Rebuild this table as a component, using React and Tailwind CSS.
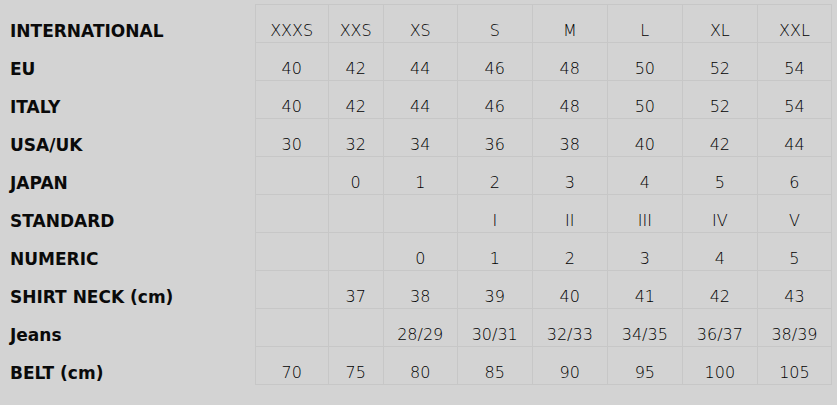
const sizes = ['XXXS', 'XXS', 'XS', 'S', 'M', 'L', 'XL', 'XXL'];

const rows = [
    { label: 'EU', values: ['40', '42', '44', '46', '48', '50', '52', '54'] },
    { label: 'ITALY', values: ['40', '42', '44', '46', '48', '50', '52', '54'] },
    { label: 'USA/UK', values: ['30', '32', '34', '36', '38', '40', '42', '44'] },
    { label: 'JAPAN', values: ['', '0', '1', '2', '3', '4', '5', '6'] },
    { label: 'STANDARD', values: ['', '', '', 'I', 'II', 'III', 'IV', 'V'] },
    { label: 'NUMERIC', values: ['', '', '0', '1', '2', '3', '4', '5'] },
    { label: 'SHIRT NECK (cm)', values: ['', '37', '38', '39', '40', '41', '42', '43'] },
    { label: 'Jeans', values: ['', '', '28/29', '30/31', '32/33', '34/35', '36/37', '38/39'] },
    { label: 'BELT (cm)', values: ['70', '75', '80', '85', '90', '95', '100', '105'] }
];

const colWidths = ['w-[73px]', 'w-[55px]', 'w-[74px]', 'w-[75px]', 'w-[75px]', 'w-[75px]', 'w-[75px]', 'w-[74px]'];

// 라벨 셀 / 값 셀 공통 스타일
const labelCls = "pl-[10px] pt-[15px] pb-0 align-top leading-[22px] text-[17px] font-bold text-[#0a0a0a] whitespace-nowrap";
const valueCls = "border border-[#c7c7c7] pt-[15px] pb-0 align-top leading-[22px] text-center text-[16px] font-extralight text-black";

const App = () => {
    return (
        <div className="min-h-screen bg-[#d3d3d3] pt-[4px] font-['DejaVu_Sans',sans-serif]">
            <table className="table-fixed border-collapse w-[832px]">
                <colgroup>
                    <col className="w-[255px]" />
                    {colWidths.map((w, i) => (
                        <col key={i} className={w} />
                    ))}
                </colgroup>
                <tbody>
                    <tr className="h-[38px]">
                        <td className={labelCls}>INTERNATIONAL</td>
                        {sizes.map((s) => (
                            <td key={s} className={valueCls}>
                                {s}
                            </td>
                        ))}
                    </tr>
                    {rows.map((row) => (
                        <tr key={row.label} className="h-[38px]">
                            <td className={labelCls}>{row.label}</td>
                            {row.values.map((v, i) => (
                                <td key={i} className={valueCls}>
                                    {v}
                                </td>
                            ))}
                        </tr>
                    ))}
                </tbody>
            </table>
        </div>
    );
};

export default App;
